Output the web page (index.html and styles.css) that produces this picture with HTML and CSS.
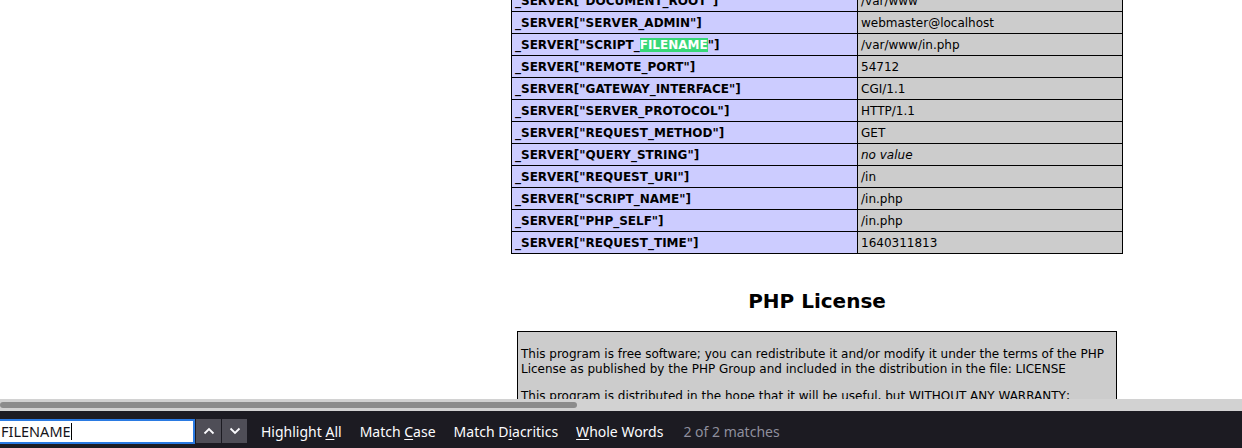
FILE: index.html
```html
<!DOCTYPE html>
<html>
<head>
<meta charset="utf-8">
<link rel="stylesheet" href="styles.css">
</head>
<body>
<div class="viewport">
  <div class="page">
    <table class="info">
      <colgroup><col class="c-e"><col class="c-v"></colgroup>
      <tr><td class="e">_SERVER["DOCUMENT_ROOT"]</td><td class="v">/var/www</td></tr>
      <tr><td class="e">_SERVER["SERVER_ADMIN"]</td><td class="v">webmaster@localhost</td></tr>
      <tr><td class="e">_SERVER["SCRIPT_<span class="found">FILENAME</span>"]</td><td class="v">/var/www/in.php</td></tr>
      <tr><td class="e">_SERVER["REMOTE_PORT"]</td><td class="v">54712</td></tr>
      <tr><td class="e">_SERVER["GATEWAY_INTERFACE"]</td><td class="v">CGI/1.1</td></tr>
      <tr><td class="e">_SERVER["SERVER_PROTOCOL"]</td><td class="v">HTTP/1.1</td></tr>
      <tr><td class="e">_SERVER["REQUEST_METHOD"]</td><td class="v">GET</td></tr>
      <tr><td class="e">_SERVER["QUERY_STRING"]</td><td class="v"><i>no value</i></td></tr>
      <tr><td class="e">_SERVER["REQUEST_URI"]</td><td class="v">/in</td></tr>
      <tr><td class="e">_SERVER["SCRIPT_NAME"]</td><td class="v">/in.php</td></tr>
      <tr><td class="e">_SERVER["PHP_SELF"]</td><td class="v">/in.php</td></tr>
      <tr><td class="e">_SERVER["REQUEST_TIME"]</td><td class="v">1640311813</td></tr>
    </table>
    <h2 class="title">PHP License</h2>
    <div class="license">
      <p>This program is free software; you can redistribute it and/or modify it under the terms of the PHP License as published by the PHP Group and included in the distribution in the file: LICENSE</p>
      <p>This program is distributed in the hope that it will be useful, but WITHOUT ANY WARRANTY; without even the implied warranty of MERCHANTABILITY or FITNESS FOR A PARTICULAR PURPOSE.</p>
      <p>If you did not receive a copy of the PHP license, or have any questions about PHP licensing, please contact license@php.net.</p>
    </div>
  </div>
</div>
<div class="hscroll"><div class="thumb"></div></div>
<div class="findbar">
  <div class="field"><span class="query">FILENAME</span><span class="caret"></span></div>
  <div class="navs">
    <button class="nav" aria-label="Previous">
      <svg width="12" height="8" viewBox="0 0 12 8"><path d="M1.5 6.5 L6 2 L10.5 6.5" fill="none" stroke="#fbfbfe" stroke-width="1.8"/></svg>
    </button>
    <button class="nav" aria-label="Next">
      <svg width="12" height="8" viewBox="0 0 12 8"><path d="M1.5 1.5 L6 6 L10.5 1.5" fill="none" stroke="#fbfbfe" stroke-width="1.8"/></svg>
    </button>
  </div>
  <div class="opts">
    <span class="opt">Highlight <u>A</u>ll</span>
    <span class="opt">Match <u>C</u>ase</span>
    <span class="opt">Match D<u>i</u>acritics</span>
    <span class="opt"><u>W</u>hole Words</span>
    <span class="status">2 of 2 matches</span>
  </div>
</div>
</body>
</html>
```

FILE: styles.css
```css
html, body {
  margin: 0;
  padding: 0;
}
body {
  width: 1242px;
  height: 448px;
  overflow: hidden;
  display: flex;
  flex-direction: column;
  background: #fff;
}
.viewport {
  height: 399px;
  overflow: hidden;
  background: #fff;
  flex: none;
}
.page {
  width: 1634px;
  margin-top: -11px;
  display: flex;
  flex-direction: column;
  align-items: center;
  font-family: "DejaVu Sans", sans-serif;
  font-size: 12px;
  line-height: 15px;
  color: #000;
}
.info {
  border-collapse: collapse;
  table-layout: fixed;
  width: 611px;
}
.c-e { width: 346px; }
.c-v { width: 265px; }
.info td {
  border: 1px solid #000;
  padding: 4px 3px 2px;
  height: 15px;
  white-space: nowrap;
  overflow: hidden;
}
.e {
  background: #ccccff;
  font-weight: bold;
}
.v {
  background: #cccccc;
}
.found {
  background: #38d878;
  color: #fff;
}
.title {
  margin: 36px 0 18px;
  font-size: 20px;
  line-height: 23px;
  font-weight: bold;
  text-align: center;
}
.license {
  width: 592px;
  background: #cccccc;
  border: 1px solid #000;
  padding: 3px 3px 0;
}
.license p {
  margin: 12px 0;
}
.hscroll {
  flex: none;
  height: 12px;
  background: #d2d2d2;
  display: flex;
  align-items: center;
}
.thumb {
  width: 577px;
  height: 6px;
  border-radius: 3px;
  background: #8c8c8c;
}
.findbar {
  flex: 1;
  box-sizing: border-box;
  padding-top: 3px;
  background: #1c1b22;
  display: flex;
  align-items: center;
  font-family: "Noto Sans", sans-serif;
  font-size: 14px;
  color: #fbfbfe;
}
.field {
  flex: none;
  box-sizing: border-box;
  width: 198px;
  height: 25px;
  margin-left: -3px;
  background: #fff;
  border: 2px solid #2a7ae2;
  padding: 0 2px;
  display: flex;
  align-items: center;
  color: #15141a;
  font-size: 14.5px;
}
.caret {
  width: 1px;
  height: 17px;
  background: #000;
}
.navs {
  display: flex;
  gap: 1px;
  margin-left: 1px;
}
.nav {
  width: 25px;
  height: 24px;
  border: none;
  padding: 0;
  background: #4f4e57;
  display: flex;
  align-items: center;
  justify-content: center;
}
.opts {
  display: flex;
  align-items: center;
  gap: 18px;
  margin-left: 14px;
  padding-top: 1px;
}
.opt u {
  text-underline-offset: 2px;
}
.status {
  margin-left: 2px;
  color: #8f8f9d;
}
```
